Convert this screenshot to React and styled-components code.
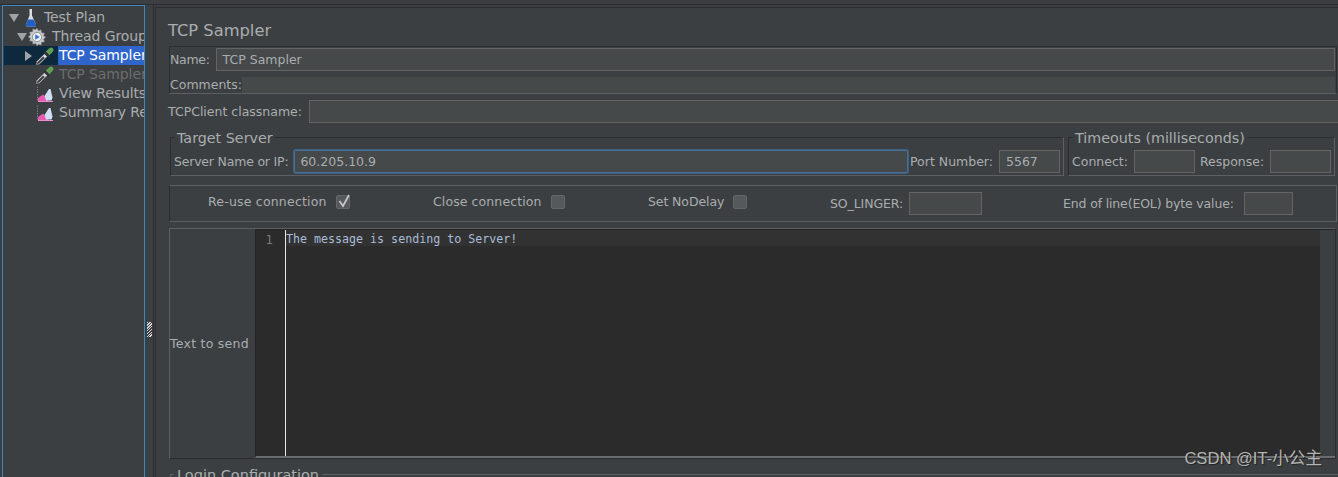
import React from 'react';
import styled, { createGlobalStyle } from 'styled-components';

const Global = createGlobalStyle`
  html, body { margin: 0; padding: 0; background: #3c3f41; }
  * { box-sizing: border-box; }
`;

const Page = styled.div`
  width: 1338px;
  height: 477px;
  overflow: hidden;
  position: relative;
  background: #3c3f41;
  color: #a9adaf;
  font-family: "DejaVu Sans", sans-serif;
  font-size: 12px;
  display: flex;
  flex-direction: column;
`;
const TopLine = styled.div`
  height: 5px;
  flex: none;
  border-top: 3px solid #3c3f41;
  border-bottom: 1px solid #2b2d2e;
`;
const Main = styled.div`
  flex: 1;
  display: flex;
  min-height: 0;
`;
const TreePanel = styled.div`
  width: 143px;
  margin-left: 2px;
  flex: none;
  border: 1px solid #3d87c4;
  border-bottom: none;
  padding-top: 2px;
  overflow: hidden;
`;
const Row = styled.div`
  height: 19px;
  display: flex;
  align-items: center;
  white-space: nowrap;
  padding-left: ${p => p.$indent}px;
  background: ${p => (p.$selected ? '#0d293e' : 'transparent')};
  margin-left: 1px;
  font-size: 14px;
  letter-spacing: -0.1px;
  color: ${p => (p.$disabled ? '#6b6d6f' : '#a9adaf')};
`;
const Arrow = styled.span`
  width: 10px;
  flex: none;
  display: flex;
  align-items: center;
  svg { display: block; }
`;
const RowIcon = styled.span`
  width: 24px;
  height: 18px;
  flex: none;
  svg { display: block; }
`;
const RowLabel = styled.span`
  flex: 1;
  height: 19px;
  line-height: 18px;
  padding-left: 1px;
  overflow: hidden;
  background: ${p => (p.$selected ? '#2f65ca' : 'transparent')};
  color: ${p => (p.$selected ? '#ffffff' : 'inherit')};
`;
const Splitter = styled.div`
  width: 8px;
  flex: none;
  padding: 317px 0 0 2px;
`;
const Grip = styled.div`
  width: 5px;
  height: 15px;
  background: repeating-linear-gradient(135deg, #d8d8d8 0 1px, #3c3f41 1px 2px);
`;
const Gutter = styled.div`
  width: 1px;
  flex: none;
  background: #2b2d2e;
  margin-right: 1px;
`;
const Content = styled.div`
  flex: 1;
  min-width: 0;
  margin-top: 2px;
  border-left: 1px solid #2b2d2e;
  border-top: 1px solid #2b2d2e;
  padding: 13px 0 0 12px;
`;
const Title = styled.div`
  font-size: 16.3px;
  line-height: 20px;
  color: #a9adaf;
  margin-bottom: 5px;
`;
const NameBox = styled.div`
  width: 1168px;
  height: 48px;
  margin-left: 1px;
  border: 1px solid #2b2d2e;
  border-bottom-color: #5c6062;
  padding: 1px 1px 0 0;
`;
const Field = styled.div`
  display: flex;
  align-items: center;
  height: ${p => p.$h || 23}px;
  margin-bottom: ${p => p.$mb || 0}px;
`;
const Label = styled.span`
  white-space: nowrap;
  height: 23px;
  line-height: 23px;
  font-size: 12.5px;
  letter-spacing: ${p => p.$ls || 0}px;
  margin-right: ${p => p.$mr || 0}px;
  margin-left: ${p => p.$ml || 0}px;
`;
const Input = styled.div`
  flex: ${p => (p.$w ? 'none' : 1)};
  width: ${p => (p.$w ? `${p.$w}px` : 'auto')};
  height: 23px;
  background: #45494a;
  border: 1px solid ${p => (p.$focus ? '#466d94' : '#646464')};
  border-radius: ${p => (p.$focus ? '2px' : '0')};
  box-shadow: ${p => (p.$focus ? '0 0 0 1px #3d6185' : 'none')};
  padding-left: ${p => (p.$focus ? 5 : 6)}px;
  font-size: 12.5px;
  line-height: 21px;
  color: #a9adaf;
`;
const CommentsArea = styled.div`
  flex: 1;
  height: 16px;
  background: #45494a;
`;
const ClassRow = styled(Field)`
  margin: 6px -1px 14px 0;
`;
const Groups = styled.div`
  display: flex;
  margin-left: 2px;
  width: 1166px;
  gap: 4px;
`;
const Group = styled.div`
  position: relative;
  width: ${p => p.$w}px;
  flex: none;
  height: 39px;
  border: 1px solid #2b2d2e;
  border-right-color: #5c6062;
  border-bottom-color: #5c6062;
  display: flex;
  align-items: flex-end;
  padding: 0 3px 2px 3px;
`;
const Legend = styled.span`
  position: absolute;
  left: 4px;
  top: -8px;
  padding: 0 2px;
  background: #3c3f41;
  font-size: 14.3px;
  line-height: 17px;
  white-space: nowrap;
`;
const Options = styled.div`
  width: 1168px;
  height: 37px;
  margin: 9px 0 0 1px;
  border: 1px solid #2b2d2e;
  border-bottom-color: #5c6062;
  border-right-color: #5c6062;
  border-top-color: #5c6062;
  display: flex;
  align-items: center;
`;
const Opt = styled.div`
  display: flex;
  align-items: center;
  flex: none;
  width: ${p => p.$w}px;
  padding-left: ${p => p.$pl || 0}px;
  margin-bottom: ${p => (p.$toggle ? 4 : 0)}px;
`;
const Check = styled.span`
  width: 14px;
  height: 14px;
  margin-left: 9px;
  border-radius: 2px;
  flex: none;
  background: #55595b;
  border: 1px solid #646769;
  display: block;
  position: relative;
  svg { position: absolute; left: -1px; top: -3px; }
`;
const SendPanel = styled.div`
  width: 1167px;
  height: 231px;
  margin: 6px 0 0 1px;
  border: 1px solid #2b2d2e;
  border-top-color: #5c6062;
  border-left-color: #5c6062;
  display: flex;
`;
const SendLabel = styled.div`
  width: 85px;
  flex: none;
  display: flex;
  align-items: center;
  font-size: 12.5px;
  letter-spacing: 0.25px;
`;
const Editor = styled.div`
  flex: 1;
  display: flex;
  background: #2b2b2b;
  border-left: 1px solid #232425;
  border-top: 1px solid #232425;
  border-bottom: 2px solid #6a6d6f;
`;
const LineNums = styled.div`
  width: 29px;
  flex: none;
  padding: 2px 12px 0 0;
  text-align: right;
  font-size: 11.5px;
  line-height: 16px;
  color: #7a7d7f;
`;
const Code = styled.div`
  flex: 1;
  border-left: 1px solid #e6e6e6;
`;
const CodeLine = styled.div`
  height: 16px;
  background: #323232;
  font-family: "DejaVu Sans Mono", monospace;
  font-size: 11.65px;
  line-height: 18px;
  color: #a9bcd8;
  white-space: pre;
`;
const ScrollTrack = styled.div`
  width: 15px;
  flex: none;
  background: #3c3f41;
`;
const LoginLegend = styled.div`
  position: relative;
  margin: 15px 0 0 2px;
  height: 20px;
  border-top: 1px solid #5c6062;
  border-left: 1px solid #5c6062;
  span {
    position: absolute;
    left: 3px;
    top: -8px;
    padding: 0 3px;
    background: #3c3f41;
    font-size: 14.5px;
    line-height: 17px;
  }
`;
const Watermark = styled.div`
  position: absolute;
  right: 16px;
  bottom: 8px;
  font-family: "Liberation Sans", "Noto Sans CJK SC", sans-serif;
  font-size: 16.6px;
  line-height: 20px;
  color: #b5b5b5;
  text-shadow: 1px 1px 1px #222;
  white-space: nowrap;
`;

const Down = () => (
  <svg width="10" height="10" viewBox="0 0 10 10"><path d="M0 1h10L5 9z" fill="#a0a3a5" /></svg>
);
const Right = () => (
  <svg width="10" height="10" viewBox="0 0 10 10"><path d="M1 0v10l7-5z" fill="#a0a3a5" /></svg>
);
const Flask = () => (
  <svg width="24" height="18" viewBox="0 0 24 18">
    <g transform="translate(6 0)">
      <path d="M4.500 0h2.500v6.500l4 9c.3 1-.2 2-1 2H2c-.9 0-1.500-1-1-2l3.500-9z" fill="#d8dde3" />
      <path d="M3 10.500h5.500l2.500 5c.3 1-.2 2-1 2H2c-.9 0-1.500-1-1-2z" fill="#1f5fc4" />
    </g>
  </svg>
);
const Gear = () => (
  <svg width="24" height="18" viewBox="0 0 24 18">
    <path d="M10 0l1.400 2.600 2.800-.8.400 2.900 2.900.4-.8 2.800L19 9l-2.300 2.100.8 2.800-2.900.4-.4 2.900-2.800-.8L10 18l-1.400-2.600-2.800.8-.4-2.900-2.900-.4.8-2.800L1 9l2.300-2.100-.8-2.800 2.900-.4.4-2.900 2.800.8z" fill="#c8cbcd" stroke="#6a6d70" strokeWidth=".6" />
    <circle cx="10" cy="9" r="4.600" fill="#eef0f2" stroke="#666" strokeWidth=".6" />
    <path d="M8.200 6.300v5.400L12.800 9z" fill="#3a78c8" />
  </svg>
);
const Pipette = () => (
  <svg width="24" height="18" viewBox="0 0 24 18">
    <g transform="translate(2 0)">
      <path d="M0 18l.6-3.400L8.500 6.800l2.700 2.700-7.800 7.800z" fill="#d9dde0" stroke="#4a4c4e" strokeWidth=".6" />
      <path d="M1 17.200l.4-2 5.800-5.600 1.500 1.500-5.700 5.500z" fill="#3b3d3f" />
      <path d="M7.500 5.500l5 5 1.300-1.400-4.900-4.900z" fill="#2e3032" />
      <path d="M9.800 4.600l3.600 3.600 3.400-3.500c.9-1 .9-2.500 0-3.400-1-1-2.500-1-3.500-.1z" fill="#5f9e54" />
    </g>
  </svg>
);
const Chart = () => (
  <svg width="24" height="18" viewBox="0 0 24 18">
    <g transform="translate(3 0)">
      <path d="M.5 1.500v14.500" fill="none" stroke="#77797b" strokeWidth="1" strokeDasharray="1.500 1" />
      <path d="M1 16v-3l5-3.500 3 3 2.500 3.500z" fill="#e85ab0" />
      <path d="M9 15.500L7.500 11 12 4h1.500l2 8.500-1 3z" fill="#cfe0f5" />
      <path d="M1 16h15v1H1z" fill="#f08ac8" />
    </g>
  </svg>
);

const rows = [
  { id: 1, indent: 5, arrow: <Down />, icon: <Flask />, text: 'Test Plan' },
  { id: 2, indent: 13, arrow: <Down />, icon: <Gear />, text: 'Thread Group' },
  { id: 3, indent: 20, arrow: <Right />, icon: <Pipette />, text: 'TCP Sampler', selected: true },
  { id: 4, indent: 30, icon: <Pipette />, text: 'TCP Sampler', disabled: true },
  { id: 5, indent: 30, icon: <Chart />, text: 'View Results Tree' },
  { id: 6, indent: 30, icon: <Chart />, text: 'Summary Report' },
];

export default function App() {
  return (
    <Page>
      <Global />
      <TopLine />
      <Main>
        <TreePanel>
          {rows.map(r => (
            <Row key={r.id} $indent={r.indent} $selected={r.selected} $disabled={r.disabled}>
              {r.arrow && <Arrow>{r.arrow}</Arrow>}
              <RowIcon>{r.icon}</RowIcon>
              <RowLabel $selected={r.selected}>{r.text}</RowLabel>
            </Row>
          ))}
        </TreePanel>
        <Splitter><Grip /></Splitter>
        <Gutter />
        <Content>
          <Title>TCP Sampler</Title>
          <NameBox>
            <Field $mb={5}>
              <Label $mr={6} $ls={-0.3}>Name:</Label>
              <Input>TCP Sampler</Input>
            </Field>
            <Field $h={17}>
              <Label>Comments:</Label>
              <CommentsArea />
            </Field>
          </NameBox>
          <ClassRow>
            <Label $mr={7}>TCPClient classname:</Label>
            <Input />
          </ClassRow>
          <Groups>
            <Group $w={894}>
              <Legend>Target Server</Legend>
              <Label $mr={6} $ls={-0.2}>Server Name or IP:</Label>
              <Input $focus>60.205.10.9</Input>
              <Label $ml={2} $mr={6}>Port Number:</Label>
              <Input $w={61}>5567</Input>
            </Group>
            <Group $w={267}>
              <Legend>Timeouts (milliseconds)</Legend>
              <Label $mr={6}>Connect:</Label>
              <Input $w={61} />
              <Label $ml={5} $mr={6}>Response:</Label>
              <Input $w={61} />
            </Group>
          </Groups>
          <Options>
            <Opt $w={263} $pl={38} $toggle>
              <Label $ls={0.2}>Re-use connection</Label>
              <Check>
                <svg width="16" height="16" viewBox="0 0 16 16"><path d="M3.500 8l3.500 5 6-11" fill="none" stroke="#c4c6c8" strokeWidth="1.800" /></svg>
              </Check>
            </Opt>
            <Opt $w={215} $toggle>
              <Label $ls={0.1}>Close connection</Label>
              <Check />
            </Opt>
            <Opt $w={182} $toggle>
              <Label $ls={-0.1}>Set NoDelay</Label>
              <Check />
            </Opt>
            <Opt $w={233}>
              <Label $mr={6} $ls={-0.1}>SO_LINGER:</Label>
              <Input $w={73} />
            </Opt>
            <Opt $w={233}>
              <Label $mr={10} $ls={-0.15}>End of line(EOL) byte value:</Label>
              <Input $w={49} />
            </Opt>
          </Options>
          <SendPanel>
            <SendLabel>Text to send</SendLabel>
            <Editor>
              <LineNums>1</LineNums>
              <Code><CodeLine>The message is sending to Server!</CodeLine></Code>
              <ScrollTrack />
            </Editor>
          </SendPanel>
          <LoginLegend><span>Login Configuration</span></LoginLegend>
        </Content>
      </Main>
      <Watermark>CSDN @IT-小公主</Watermark>
    </Page>
  );
}
